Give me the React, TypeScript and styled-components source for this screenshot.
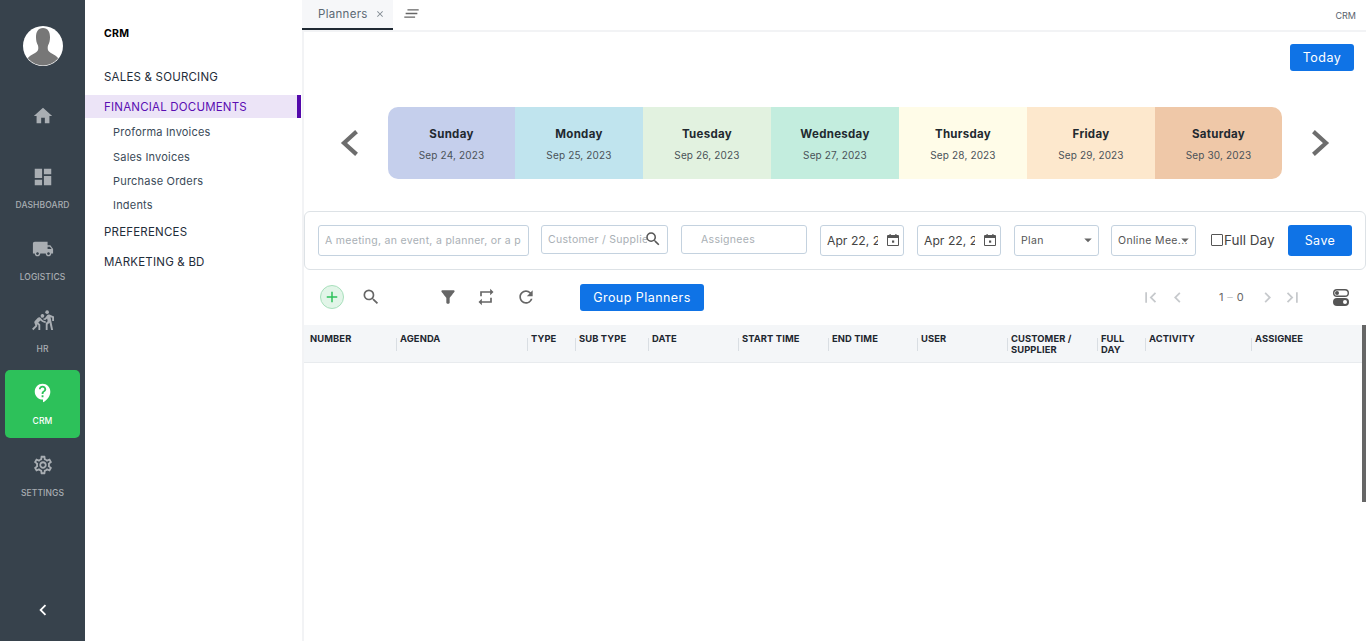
import React from "react";
import styled, { createGlobalStyle } from "styled-components";
import {
  MdHome, MdDashboard, MdLocalShipping, MdSportsKabaddi, MdContactSupport, MdOutlineSettings,
  MdChevronLeft, MdClose, MdSearch, MdRepeat, MdRefresh, MdFirstPage, MdLastPage, MdChevronRight,
  MdArrowDropDown, MdAdd, MdFilterAlt,
} from "react-icons/md";

const Global = createGlobalStyle`
  html, body { margin: 0; padding: 0; height: 100%; background: #fff; overflow: hidden; }
  #root { height: 100%; }
  * { box-sizing: border-box; }
  body { font-family: Inter, "Open Sans", "Liberation Sans", sans-serif; color: #1f2933; }
`;

const Shell = styled.div`display: flex; height: 641px; width: 1366px; overflow: hidden;`;

const Rail = styled.nav`
  width: 85px; flex: none; background: #37424c; display: flex; flex-direction: column;
  align-items: center; padding-top: 26px; gap: 4px; position: relative;
`;
const Avatar = styled.div`width: 40px; height: 40px; margin-bottom: 22px; flex: none;`;
const RailItem = styled.div<{ $active?: boolean; $short?: boolean }>`
  width: 75px; height: ${p => (p.$short ? 58 : 68)}px; flex: none; border-radius: 5px;
  display: flex; flex-direction: column; align-items: center; padding-top: ${p => (p.$short ? 12 : 11)}px;
  background: ${p => (p.$active ? "#2dc15a" : "transparent")};
  color: ${p => (p.$active ? "#fff" : "#a9aeb3")};
`;
const RailIcon = styled.div`height: 23px; display: flex; align-items: center; justify-content: center; font-size: 22px;`;
const RailLabel = styled.div`margin-top: 11px; font-size: 8.5px; font-weight: 500; line-height: 12px; letter-spacing: 0.1px; white-space: nowrap;`;
const Collapse = styled.div`margin-top: auto; margin-bottom: 20px; color: #fff; font-size: 22px; height: 22px; display: flex;`;

const Side = styled.aside`width: 219px; flex: none; border-right: 2px solid #f2f3f5; display: flex; flex-direction: column; padding-top: 27px;`;
const SideTitle = styled.div`padding-left: 19px; font-size: 10.5px; font-weight: 700; color: #000; line-height: 13px; margin-bottom: 22px; letter-spacing: 0.3px;`;
const Group = styled.div<{ $active?: boolean }>`
  height: ${p => (p.$active ? 23 : 30)}px; display: flex; align-items: center; padding-left: 19px;
  font-size: 11.5px; font-weight: 400; letter-spacing: 0.2px; white-space: nowrap; flex: none;
  color: ${p => (p.$active ? "#5a0eb3" : "#1f2d3a")};
  background: ${p => (p.$active ? "#ece4f7" : "transparent")};
  border-right: ${p => (p.$active ? "4px solid #5308ab" : "none")};
  margin-right: 1px;
  margin-top: ${p => (p.$active ? 3 : 0)}px;
`;
const SubList = styled.div`display: flex; flex-direction: column; padding-top: 2.2px; height: 99px; flex: none;`;
const SubItem = styled.div`height: 24.3px; flex: none; display: flex; align-items: center; padding-left: 28px; font-size: 11px; color: #3a4a58; letter-spacing: 0.2px;`;

const Main = styled.main`flex: 1; min-width: 0; display: flex; flex-direction: column;`;
const TabBar = styled.div`height: 32px; flex: none; margin-left: -2px; border-bottom: 2px solid #f2f3f5; display: flex; align-items: stretch; background: #fff;`;
const Tab = styled.div`
  width: 91px; height: 30px; background: #f6f7f9; border-bottom: 2px solid #1f2933;
  display: flex; align-items: center; padding-left: 16px; gap: 7px; font-size: 11.5px; color: #5b6873; letter-spacing: 0.3px;
`;
const TabClose = styled.span`display: flex; font-size: 10px; color: #7d868e;`;
const TabMenu = styled.div`margin-left: 11px; width: 16px; display: flex; align-items: center; padding-bottom: 3px;`;
const TabModule = styled.div`margin-left: auto; padding-right: 10px; font-size: 9px; color: #58636d; display: flex; align-items: center;`;

const TodayRow = styled.div`display: flex; justify-content: flex-end; padding: 12px 12px 0 0; height: 75px; flex: none;`;
const Blue = styled.button`
  border: none; background: #0f73e6; color: #fff; border-radius: 3px; font-family: inherit;
  font-size: 12.5px; font-weight: 400; letter-spacing: 0.45px; display: flex; align-items: center; justify-content: center; padding: 0;
`;
const TodayBtn = styled(Blue)`width: 64px; height: 27px;`;

const WeekRow = styled.div`display: flex; align-items: center; height: 72px; flex: none; padding-left: 84px;`;
const WeekWrap = styled.div`position: relative;`;
const Arrow = styled.div<{ $side: "left" | "right" }>`
  width: 24px; height: 30px; color: #6d6d6d; position: absolute; top: 21px; display: flex;
  ${p => p.$side}: -51px;
`;
const WeekStrip = styled.div`
  display: grid; grid-template-columns: 127px 128px 128px 128px 128px 128px 127px; width: 894px; height: 72px;
  border-radius: 10px; overflow: hidden;
`;
const Day = styled.div<{ $bg: string }>`
  background: ${p => p.$bg}; display: flex; flex-direction: column; align-items: center; padding-top: 20px;
`;
const DayName = styled.div`font-size: 11.5px; font-weight: 700; line-height: 14px; color: #22292f; letter-spacing: 0.3px;`;
const DayDate = styled.div`font-size: 10px; line-height: 13px; margin-top: 8px; color: #4a5258; letter-spacing: 0.15px;`;

const FormCard = styled.div`
  margin-top: 32px; height: 59px; flex: none; border: 1px solid #dde2e6; border-radius: 6px;
  display: flex; align-items: flex-start; padding: 13px 0 0 13px;
`;
const Input = styled.input<{ $w: number; $ml: number; $h?: number }>`
  width: ${p => p.$w}px; height: ${p => p.$h ?? 31}px; margin-left: ${p => p.$ml}px; flex: none;
  border: 1px solid #c4d2df; border-radius: 3px; font-family: inherit; font-size: 10.5px; letter-spacing: 0.3px;
  padding: 0 7px 0 6px; outline: none; color: #333; background: #fff;
  &::placeholder { color: #a9afb5; opacity: 1; }
`;
const FieldWrap = styled.div<{ $w: number; $ml: number }>`
  position: relative; width: ${p => p.$w}px; margin-left: ${p => p.$ml}px; flex: none; display: flex;
`;
const CustomerInput = styled(Input)`width: 100%; margin-left: 0; padding-right: 20px;`;
const SearchBtn = styled.span`position: absolute; right: 6px; top: 5px; display: flex; font-size: 18px; color: #555;`;
const DateInput = styled(Input)`width: 100%; margin-left: 0; font-size: 12.2px; letter-spacing: 0; padding-right: 25px; color: #444;`;
const CalIcon = styled.span`position: absolute; right: 5px; top: 9px; display: flex; color: #555;`;
const Select = styled.div<{ $w: number; $ml: number }>`
  width: ${p => p.$w}px; margin-left: ${p => p.$ml}px; height: 31px; flex: none; border: 1px solid #c4d2df; border-radius: 3px;
  display: flex; align-items: center; padding-left: 6px; font-size: 10.5px; letter-spacing: 0.35px; color: #555; position: relative; white-space: nowrap;
`;
const Caret = styled.span`position: absolute; right: 1px; top: 5px; display: flex; font-size: 18px; color: #666;`;
const Check = styled.span`width: 12px; height: 12px; border: 1px solid #555; border-radius: 1px; margin: 9px 0 0 15px; flex: none;`;
const CheckLabel = styled.span`font-size: 13.5px; line-height: 31px; color: #444; margin-left: 1px; white-space: nowrap;`;
const SaveBtn = styled(Blue)`width: 64px; height: 31px; margin-left: auto; margin-right: 13px;`;

const ToolRow = styled.div`height: 55px; flex: none; display: flex; align-items: center; padding: 0 0 1px 16px; color: #666;`;
const AddBtn = styled.div`
  width: 24px; height: 24px; border-radius: 50%; background: #e2f5e8; border: 1px solid #a8e0bc; color: #2dc15a;
  display: flex; align-items: center; justify-content: center; font-size: 18px; flex: none;
`;
const ToolIcon = styled.span<{ $ml: number; $size?: number; $c?: string }>`
  display: flex; margin-left: ${p => p.$ml}px; font-size: ${p => p.$size ?? 20}px; color: ${p => p.$c ?? "#666"}; flex: none;
`;
const GroupBtn = styled(Blue)`width: 124px; height: 27px; margin-left: 44px;`;
const Pager = styled.div`margin-left: auto; display: flex; align-items: center; padding-right: 16px;`;
const PagerText = styled.span`font-size: 11px; color: #666; margin: 0 13px 0 31px; white-space: pre; letter-spacing: 0.4px;`;
const Dash = styled.span`color: #c6c9cc;`;

const TableArea = styled.div`flex: 1; display: flex; min-height: 0;`;
const TableBody = styled.div`flex: 1; min-width: 0;`;
const Head = styled.div`
  height: 38px; background: #f4f6f8; border-bottom: 1px solid #e8ebee; display: grid; padding-left: 2px; padding-top: 8px;
  grid-template-columns: 90px 131px 48px 73px 90px 90px 89px 90px 90px 48px 106px 1fr;
`;
const HeadCell = styled.div<{ $first?: boolean }>`
  position: relative; font-size: 9.4px; font-weight: 700; line-height: 11px; color: #1e2730; padding: 0 8px 0 4px;
  letter-spacing: 0.1px;
  &::before {
    content: ""; position: absolute; left: 0; top: 5px; height: 13px; width: 1px; background: ${p => (p.$first ? "transparent" : "#d9dee3")};
  }
`;
const Scroll = styled.div`width: 4px; flex: none;`;
const Thumb = styled.div`height: 177px; width: 4px; background: #666;`;

const days = [
  ["Sunday", "Sep 24, 2023", "#c5cfec"], ["Monday", "Sep 25, 2023", "#c0e4ee"], ["Tuesday", "Sep 26, 2023", "#e2f2e0"],
  ["Wednesday", "Sep 27, 2023", "#c3edde"], ["Thursday", "Sep 28, 2023", "#fffce8"], ["Friday", "Sep 29, 2023", "#fde8cd"],
  ["Saturday", "Sep 30, 2023", "#efc8a8"],
];
const cols = ["NUMBER", "AGENDA", "TYPE", "SUB TYPE", "DATE", "START TIME", "END TIME", "USER", "CUSTOMER / SUPPLIER", "FULL DAY", "ACTIVITY", "ASSIGNEE"];

const AvatarArt = () => (
  <svg viewBox="0 0 40 40" width="40" height="40">
    <defs><clipPath id="av"><circle cx="20" cy="20" r="19.5" /></clipPath></defs>
    <circle cx="20" cy="20" r="20" fill="#fff" />
    <g clipPath="url(#av)" fill="#777">
      <path d="M20 2C15 2 13 6 13 11C13 14 13.5 17 15 19.5C15.500 22 15.500 24 14 25.5C11 28 7 29 4 33L4 42H36V33C33 29 29 28 26 25.5C24.500 24 24.500 22 25 19.500C26.500 17 27 14 27 11C27 6 25 2 20 2Z" />
    </g>
  </svg>
);
const SlantLines = () => (
  <svg viewBox="0 0 16 10" width="15" height="9" fill="none" stroke="#666" strokeWidth="1.5">
    <path d="M3.500 1H16M1.500 5H14.500M0 9H12" />
  </svg>
);
const Chevron = ({ flip }: { flip?: boolean }) => (
  <svg viewBox="0 0 24 30" width="24" height="30" fill="none" stroke="currentColor" strokeWidth="4.2" strokeLinecap="square">
    <path d={flip ? "M6 5l11 10L6 25" : "M18 5L7 15l11 10"} />
  </svg>
);
const Toggles = () => (
  <svg viewBox="0 0 18 18" width="18" height="18">
    <rect x="1.700" y="1.700" width="14.600" height="6.600" rx="3.300" fill="none" stroke="#555" strokeWidth="1.400" />
    <circle cx="5" cy="5" r="2" fill="#555" />
    <rect x="1" y="10" width="16" height="8" rx="4" fill="#555" />
    <circle cx="13" cy="14" r="2" fill="#fff" />
  </svg>
);
const Calendar = () => (
  <svg viewBox="0 0 12 12" width="12" height="12" fill="#555">
    <path d="M2.500 0h1.200v1h4.600V0h1.200v1H11a1 1 0 0 1 1 1v9a1 1 0 0 1-1 1H1a1 1 0 0 1-1-1V2a1 1 0 0 1 1-1h1.500zM1 4v7h10V4z" />
    <rect x="5" y="6.500" width="2.200" height="2.200" />
  </svg>
);

export default function App() {
  return (
    <Shell>
      <Global />
      <Rail>
        <Avatar><AvatarArt /></Avatar>
        <RailItem $short><RailIcon><MdHome /></RailIcon></RailItem>
        <RailItem><RailIcon><MdDashboard /></RailIcon><RailLabel>DASHBOARD</RailLabel></RailItem>
        <RailItem><RailIcon><MdLocalShipping /></RailIcon><RailLabel>LOGISTICS</RailLabel></RailItem>
        <RailItem><RailIcon><MdSportsKabaddi /></RailIcon><RailLabel>HR</RailLabel></RailItem>
        <RailItem $active><RailIcon><MdContactSupport /></RailIcon><RailLabel>CRM</RailLabel></RailItem>
        <RailItem><RailIcon><MdOutlineSettings /></RailIcon><RailLabel>SETTINGS</RailLabel></RailItem>
        <Collapse><MdChevronLeft /></Collapse>
      </Rail>
      <Side>
        <SideTitle>CRM</SideTitle>
        <Group>SALES &amp; SOURCING</Group>
        <Group $active>FINANCIAL DOCUMENTS</Group>
        <SubList>
          <SubItem>Proforma Invoices</SubItem>
          <SubItem>Sales Invoices</SubItem>
          <SubItem>Purchase Orders</SubItem>
          <SubItem>Indents</SubItem>
        </SubList>
        <Group>PREFERENCES</Group>
        <Group>MARKETING &amp; BD</Group>
      </Side>
      <Main>
        <TabBar>
          <Tab>Planners<TabClose><MdClose /></TabClose></Tab>
          <TabMenu><SlantLines /></TabMenu>
          <TabModule>CRM</TabModule>
        </TabBar>
        <TodayRow><TodayBtn>Today</TodayBtn></TodayRow>
        <WeekRow>
          <WeekWrap>
            <Arrow $side="left"><Chevron /></Arrow>
            <WeekStrip>
              {days.map(([n, d, c]) => (
                <Day key={n} $bg={c}><DayName>{n}</DayName><DayDate>{d}</DayDate></Day>
              ))}
            </WeekStrip>
            <Arrow $side="right"><Chevron flip /></Arrow>
          </WeekWrap>
        </WeekRow>
        <FormCard>
          <Input $w={211} $ml={0} placeholder="A meeting, an event, a planner, or a plan" readOnly />
          <FieldWrap $w={127} $ml={12}>
            <CustomerInput $w={127} $ml={0} $h={29} placeholder="Customer / Supplier" readOnly />
            <SearchBtn><MdSearch /></SearchBtn>
          </FieldWrap>
          <Input $w={126} $ml={13} $h={29} placeholder="    Assignees" readOnly />
          <FieldWrap $w={84} $ml={13}>
            <DateInput $w={84} $ml={0} value="Apr 22, 2023" readOnly />
            <CalIcon><Calendar /></CalIcon>
          </FieldWrap>
          <FieldWrap $w={84} $ml={13}>
            <DateInput $w={84} $ml={0} value="Apr 22, 2023" readOnly />
            <CalIcon><Calendar /></CalIcon>
          </FieldWrap>
          <Select $w={85} $ml={13}>Plan<Caret><MdArrowDropDown /></Caret></Select>
          <Select $w={85} $ml={12}>Online Mee...<Caret><MdArrowDropDown /></Caret></Select>
          <Check />
          <CheckLabel>Full Day</CheckLabel>
          <SaveBtn>Save</SaveBtn>
        </FormCard>
        <ToolRow>
          <AddBtn><MdAdd /></AddBtn>
          <ToolIcon $ml={17}><MdSearch /></ToolIcon>
          <ToolIcon $ml={57}><MdFilterAlt /></ToolIcon>
          <ToolIcon $ml={18}><MdRepeat /></ToolIcon>
          <ToolIcon $ml={20}><MdRefresh /></ToolIcon>
          <GroupBtn>Group Planners</GroupBtn>
          <Pager>
            <ToolIcon $ml={0} $c="#c6c9cc" $size={21}><MdFirstPage /></ToolIcon>
            <ToolIcon $ml={6} $c="#c6c9cc" $size={21}><MdChevronLeft /></ToolIcon>
            <PagerText>1 <Dash>–</Dash> 0</PagerText>
            <ToolIcon $ml={0} $c="#c6c9cc" $size={21}><MdChevronRight /></ToolIcon>
            <ToolIcon $ml={4} $c="#c6c9cc" $size={21}><MdLastPage /></ToolIcon>
            <ToolIcon $ml={29}><Toggles /></ToolIcon>
          </Pager>
        </ToolRow>
        <TableArea>
          <TableBody>
            <Head>
              {cols.map((c, i) => <HeadCell key={c} $first={i === 0}>{c}</HeadCell>)}
            </Head>
          </TableBody>
          <Scroll><Thumb /></Scroll>
        </TableArea>
      </Main>
    </Shell>
  );
}
